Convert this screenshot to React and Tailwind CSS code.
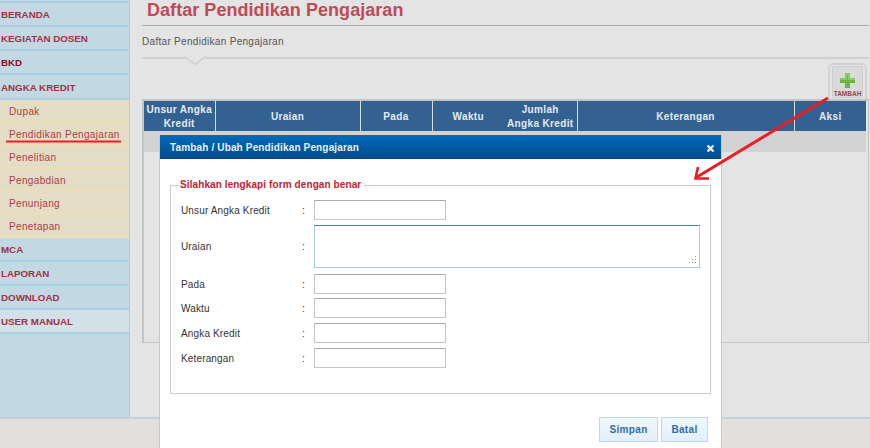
import React from 'react';

const font = "font-['Liberation_Sans',Arial,sans-serif]";

const topRows = [
    { label: 'BERANDA', h: 'h-[24px]' },
    { label: 'KEGIATAN DOSEN', h: 'h-[24px]' },
    { label: 'BKD', h: 'h-[24px]', dark: true },
    { label: 'ANGKA KREDIT', h: 'h-[25px]' },
];
const subRows = ['Dupak', 'Pendidikan Pengajaran', 'Penelitian', 'Pengabdian', 'Penunjang', 'Penetapan'];
const bottomRows = [
    { label: 'MCA' },
    { label: 'LAPORAN' },
    { label: 'DOWNLOAD' },
    { label: 'USER MANUAL', hover: true },
];

const fields = [
    { label: 'Unsur Angka Kredit', wrap: 'h-[20px] mt-[9px]' },
    { label: 'Uraian', area: true, wrap: 'h-[43px] mt-[5px]' },
    { label: 'Pada', wrap: 'h-[20px] mt-[6px]' },
    { label: 'Waktu', wrap: 'h-[20px] mt-[4px]' },
    { label: 'Angka Kredit', wrap: 'h-[20px] mt-[5px]' },
    { label: 'Keterangan', wrap: 'h-[20px] mt-[5px]' },
];

function NavRow({ row, h }) {
    return (
        <div className={`flex items-center pl-[1px] pt-[3px] border-b-2 border-[#a9cfe3] text-[9.75px] font-bold ${h || 'h-[24px]'} ${row.hover ? 'bg-[#d3e0e7]' : ''} ${row.dark ? 'text-[#8a0f1e]' : 'text-[#9c3345]'}`}>
            {row.label}
        </div>
    );
}

function Sidebar() {
    return (
        <aside className="w-[130px] shrink-0 bg-[#c2d8e3] border-r border-[#b5cbd6] pt-[2px]">
            <div className="border-t-2 border-[#a9cfe3] -mt-[1px]" />
            {topRows.map((r) => <NavRow key={r.label} row={r} h={r.h} />)}
            {subRows.map((label) => (
                <div key={label} className="flex items-center h-[23px] pl-[9px] pt-[2px] bg-[#e4dcc4] border-b-2 border-[#eadfb8] text-[10px] tracking-[0.35px] text-[#ad3c4a]">
                    {label}
                </div>
            ))}
            {bottomRows.map((r) => <NavRow key={r.label} row={r} />)}
        </aside>
    );
}

function TambahButton() {
    return (
        <div className="ml-auto mr-[2px] w-[39px] h-[36px] px-[2px] pt-[1px] border-2 border-b-0 border-[#d2d2d2] rounded-t-[5px]">
            <div className="flex flex-col items-center w-[31px] h-[32px] pt-[6px] bg-[#dadada] border border-[#cdcdcd] rounded-[2px]">
                <svg width="15" height="15" viewBox="0 0 15 15">
                    <path d="M5 0h5v5h5v5h-5v5H5v-5H0V5h5z" fill="#6db33f" />
                    <path d="M5 0h5v5h5v2H8V2H7v5H0V5h5z" fill="#8ccc5c" />
                </svg>
                <span className="mt-[2px] text-[6.5px] leading-[7px] font-bold text-[#9c3f4c]">TAMBAH</span>
            </div>
        </div>
    );
}

function DataTable() {
    const th = 'border-r border-[#d5dde5] p-0 pt-[2px] font-bold';
    return (
        <div className="h-[244px] border-2 border-[#c4c4c4] border-r border-b">
            <table className="table-fixed w-[722px] text-[10px] leading-[14px] tracking-[0.35px] text-[#e4ebf2] text-center">
                <colgroup>
                    <col className="w-[71px]" />
                    <col className="w-[145px]" />
                    <col className="w-[72px]" />
                    <col className="w-[72px]" />
                    <col className="w-[73px]" />
                    <col className="w-[217px]" />
                    <col className="w-[72px]" />
                </colgroup>
                <thead>
                    <tr className="h-[30px] bg-[#336292]">
                        <th className={th}>Unsur Angka Kredit</th>
                        <th className={th}>Uraian</th>
                        <th className={th}>Pada</th>
                        <th className="p-0 pt-[2px] font-bold">Waktu</th>
                        <th className={`${th} whitespace-nowrap`}>Jumlah<br />Angka Kredit</th>
                        <th className={th}>Keterangan</th>
                        <th className="p-0 pt-[2px] font-bold">Aksi</th>
                    </tr>
                </thead>
                <tbody>
                    <tr className="h-[21px] bg-[#d3d3d3]"><td colSpan={7} /></tr>
                </tbody>
            </table>
        </div>
    );
}

function Modal() {
    return (
        <div className="absolute left-[159px] top-[135px] w-[563px] h-[313px] bg-white border-x border-[#c8c8c8] flex flex-col">
            <div className="flex items-center justify-between h-[24px] pl-[10px] pr-[6px] bg-gradient-to-b from-[#006bbb] to-[#004a8c] text-[10px] font-bold tracking-[0.15px] text-[#e8f0f8]">
                <span>Tambah / Ubah Pendidikan Pengajaran</span>
                <svg width="9" height="9" viewBox="0 0 9 9" className="mt-[3px]">
                    <path d="M1.5 1.5l6 6M7.5 1.5l-6 6" stroke="#e8f0f8" strokeWidth="2.4" />
                </svg>
            </div>
            <fieldset className="mx-[10px] mt-[20px] h-[215px] border border-[#cccccc] pl-[10px] pr-[10px]">
                <legend className="ml-[-2px] px-[1px] pr-[3px] text-[10px] leading-[12px] font-bold tracking-[0.1px] text-[#c9202f]">
                    Silahkan lengkapi form dengan benar
                </legend>
                {fields.map((f) => (
                    <div key={f.label} className={`flex items-center text-[10px] tracking-[0.15px] text-[#333333] ${f.wrap}`}>
                        <span className="w-[121px]">{f.label}</span>
                        <span className="w-[12px]">:</span>
                        {f.area ? (
                            <div className="relative w-[386px] h-[43px]">
                                <textarea readOnly className="block w-full h-full border border-[#a9c8dc] border-t-[#4d7fa8] resize-none outline-none" />
                                <svg className="absolute right-[3px] bottom-[4px]" width="8" height="8" viewBox="0 0 8 8" fill="#9a9a9a">
                                    <rect x="6" y="0" width="1" height="1" />
                                    <rect x="3" y="3" width="1" height="1" />
                                    <rect x="6" y="3" width="1" height="1" />
                                    <rect x="0" y="6" width="1" height="1" />
                                    <rect x="3" y="6" width="1" height="1" />
                                    <rect x="6" y="6" width="1" height="1" />
                                </svg>
                            </div>
                        ) : (
                            <input readOnly className="w-[132px] h-[20px] border border-[#c4c4c4] border-t-[#aaaaaa] outline-none" />
                        )}
                    </div>
                ))}
            </fieldset>
            <div className="flex justify-end gap-[3px] mt-[23px] pr-[13px] text-[10px] font-bold tracking-[0.35px] text-[#2f6da6]">
                <button className="w-[59px] h-[25px] border border-[#bcd8ee] bg-gradient-to-b from-[#f2f8fe] to-[#e2effb]">Simpan</button>
                <button className="w-[47px] h-[25px] border border-[#bcd8ee] bg-gradient-to-b from-[#f2f8fe] to-[#e2effb]">Batal</button>
            </div>
        </div>
    );
}

function Annotations() {
    return (
        <svg className="absolute inset-0 pointer-events-none" width="870" height="448" viewBox="0 0 870 448">
            <path d="M6 141.5H121" stroke="#ee1c25" strokeWidth="2.2" />
            <path d="M828 98L697 177" stroke="#ee1c25" strokeWidth="3" />
            <path d="M698 167L695.5 178.5H709" stroke="#ee1c25" strokeWidth="2.6" fill="none" />
        </svg>
    );
}

export default function App() {
    return (
        <div className={`${font} relative w-[870px] h-[448px] overflow-hidden flex flex-col bg-[#e4e4e4]`}>
            <div className="flex h-[417px]">
                <Sidebar />
                <main className="flex-1 pl-[12px] pr-[1px]">
                    <h1 className="h-[25px] pl-[5px] text-[18px] leading-[20px] font-bold tracking-[0.05px] text-[#c04a57]">
                        Daftar Pendidikan Pengajaran
                    </h1>
                    <div className="h-[1px] bg-[#aaaaaa]" />
                    <p className="mt-[9px] h-[14px] text-[10px] leading-[14px] tracking-[0.3px] text-[#555555]">Daftar Pendidikan Pengajaran</p>
                    <div className="relative mt-[8px] h-[6px]">
                        <div className="border-t-2 border-[#d0d0d0]" />
                        <svg className="absolute left-[41px] -top-[1px]" width="24" height="10" viewBox="0 0 24 10">
                            <path d="M0 1H2L12 8.5L22 1H24" fill="#e4e4e4" stroke="#d0d0d0" strokeWidth="1.6" />
                        </svg>
                    </div>
                    <TambahButton />
                    <DataTable />
                </main>
            </div>
            <div className="flex-1 bg-[#e2e0de] border-t-2 border-[#c4d0d8]" />
            <Modal />
            <Annotations />
        </div>
    );
}
